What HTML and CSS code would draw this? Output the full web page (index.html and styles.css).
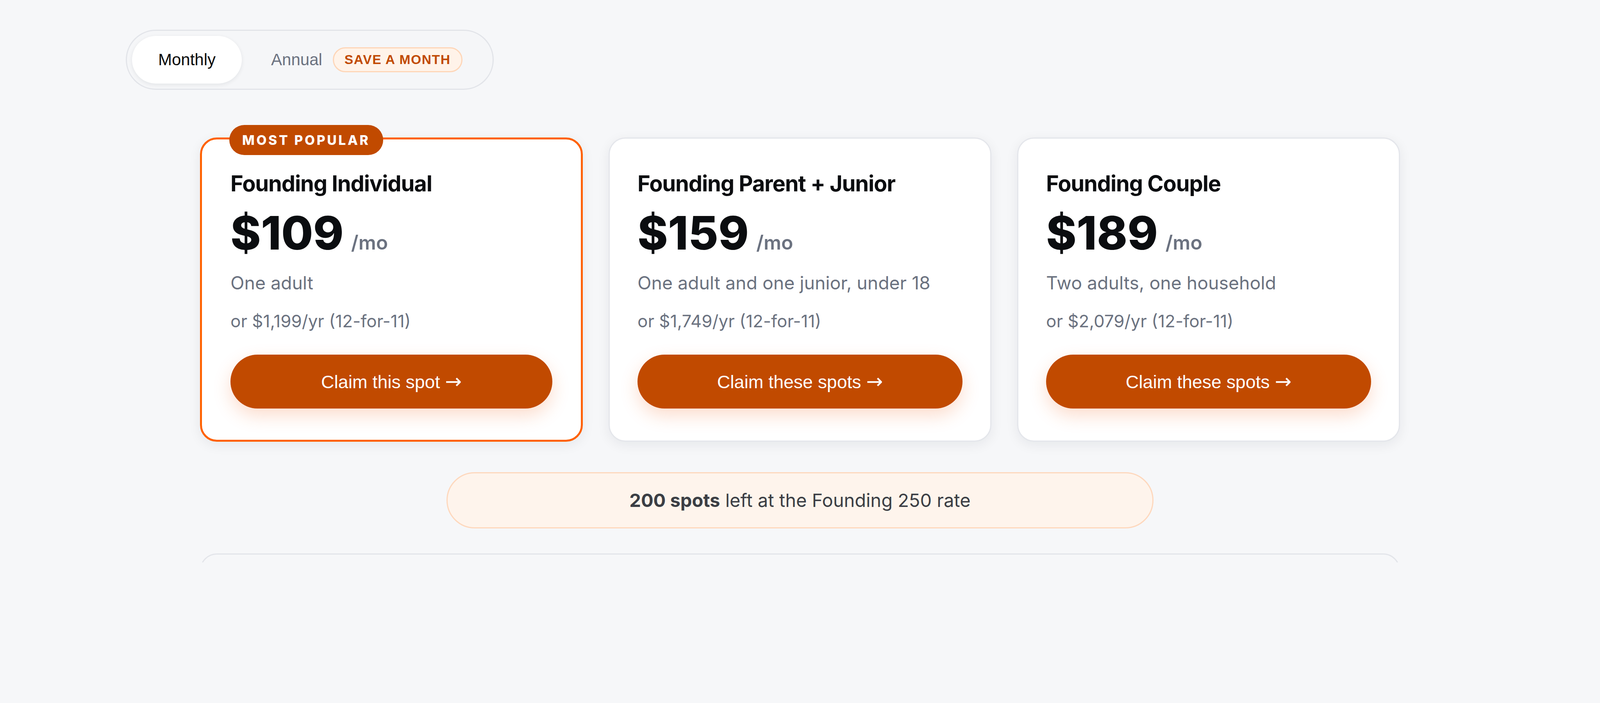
FILE: index.html
```html
<!DOCTYPE html>
<html lang="en">
<head>
  <meta charset="UTF-8">
  <meta name="viewport" content="width=device-width, initial-scale=1.0">
  <title>Founding 250 Pricing</title>
  <link rel="stylesheet" href="styles.css">
</head>
<body>
  <main class="page">
    <div class="billing-toggle">
      <button class="toggle-option active">Monthly</button>
      <button class="toggle-option">Annual <span class="save-tag">SAVE A MONTH</span></button>
    </div>

    <div class="plans">
      <div class="plan popular">
        <span class="plan-badge">MOST POPULAR</span>
        <h3 class="plan-name">Founding Individual</h3>
        <div class="plan-price"><span class="amount">$109</span><span class="period">/mo</span></div>
        <p class="plan-desc">One adult</p>
        <p class="plan-annual">or $1,199/yr (12-for-11)</p>
        <a class="plan-cta" href="#">Claim this spot <span class="arrow">→</span></a>
      </div>

      <div class="plan">
        <h3 class="plan-name">Founding Parent + Junior</h3>
        <div class="plan-price"><span class="amount">$159</span><span class="period">/mo</span></div>
        <p class="plan-desc">One adult and one junior, under 18</p>
        <p class="plan-annual">or $1,749/yr (12-for-11)</p>
        <a class="plan-cta" href="#">Claim these spots <span class="arrow">→</span></a>
      </div>

      <div class="plan">
        <h3 class="plan-name">Founding Couple</h3>
        <div class="plan-price"><span class="amount">$189</span><span class="period">/mo</span></div>
        <p class="plan-desc">Two adults, one household</p>
        <p class="plan-annual">or $2,079/yr (12-for-11)</p>
        <a class="plan-cta" href="#">Claim these spots <span class="arrow">→</span></a>
      </div>
    </div>

    <div class="spots-left"><strong>200 spots</strong> left at the Founding 250 rate</div>

    <div class="next-section"></div>
  </main>
</body>
</html>
```

FILE: styles.css
```css
* {
  margin: 0;
  padding: 0;
  box-sizing: border-box;
}

body {
  font-family: 'Inter', 'Liberation Sans', sans-serif;
  background: #f6f7f9;
  color: #0b0d10;
  overflow: hidden;
}

.page {
  width: 3456px;
  height: 1440px;
  margin: 0 auto;
  padding-top: 76px;
  overflow: hidden;
}

/* Billing toggle */
.billing-toggle {
  display: inline-flex;
  align-items: center;
  gap: 8px;
  margin-left: 2px;
  padding: 13px;
  border: 3px solid #e2e4e9;
  border-radius: 999px;
  background: #f5f6f8;
}

.toggle-option {
  display: flex;
  align-items: center;
  gap: 27px;
  height: 122px;
  padding: 0 64px 0 67px;
  border: none;
  border-radius: 999px;
  background: transparent;
  font-family: 'Liberation Sans', Arial, sans-serif;
  font-size: 42px;
  color: #6b7280;
  cursor: pointer;
}

.toggle-option.active {
  padding: 0 67px;
  background: #fff;
  color: #0a0a0a;
  box-shadow: 0 3px 11px rgba(15, 23, 42, 0.08);
}

.save-tag {
  display: inline-flex;
  align-items: center;
  height: 64px;
  padding: 0 27px;
  border: 3px solid #fed6b8;
  border-radius: 999px;
  background: #fff3e9;
  color: #c14a00;
  font-weight: 700;
  font-size: 33.6px;
  letter-spacing: 1.6px;
}

/* Plans */
.plans {
  display: grid;
  grid-template-columns: repeat(3, 1fr);
  gap: 66px;
  width: 3072px;
  margin: 122px auto 0;
}

.plan {
  position: relative;
  display: flex;
  flex-direction: column;
  padding: 78px 71px 82px;
  background: #fff;
  border: 3px solid #e4e6eb;
  border-radius: 43px;
  box-shadow: 0 8px 32px rgba(15, 23, 42, 0.07);
}

.plan.popular {
  border: 5px solid #ff6100;
  padding: 76px 73px 80px;
}

.plan-badge {
  position: absolute;
  top: -37px;
  left: 70px;
  height: 77px;
  padding: 0 33px;
  border-radius: 999px;
  background: #c14a00;
  color: #fff;
  font-size: 33.6px;
  font-weight: 800;
  line-height: 77px;
  letter-spacing: 0.14em;
}

.plan-name {
  font-size: 56px;
  font-weight: 700;
  line-height: 74px;
  letter-spacing: -0.02em;
}

.plan-price {
  display: flex;
  align-items: baseline;
  margin-top: 30px;
}

.amount {
  font-size: 118px;
  font-weight: 800;
  line-height: 118px;
}

.period {
  margin-left: 19px;
  font-size: 50px;
  font-weight: 600;
  color: #6b7280;
}

.plan-desc {
  margin-top: 37px;
  font-size: 46.4px;
  line-height: 64px;
  color: #6b7280;
}

.plan-annual {
  margin-top: 37px;
  font-size: 44px;
  line-height: 59px;
  color: #6b7280;
}

.plan-cta {
  display: block;
  margin-top: 56px;
  height: 138px;
  border-radius: 999px;
  background: #c14a00;
  color: #fff;
  font-family: 'Liberation Sans', Arial, sans-serif;
  font-size: 46.4px;
  line-height: 138px;
  text-align: center;
  text-decoration: none;
  box-shadow: 0 18px 45px rgba(240, 100, 30, 0.22);
}

.plan-cta .arrow {
  font-family: 'DejaVu Sans', sans-serif;
  font-size: 1.1em;
}

/* Spots notice */
.spots-left {
  width: 1810px;
  height: 144px;
  margin: 78px auto 0;
  border: 3px solid #fed8bd;
  border-radius: 999px;
  background: #fef4ec;
  color: #3b3e44;
  font-size: 47px;
  line-height: 138px;
  text-align: center;
}

.spots-left strong {
  font-weight: 700;
}

.next-section {
  width: 3072px;
  height: 240px;
  margin: 64px auto 0;
  border: 3px solid #e3e5ea;
  border-radius: 43px;
}
```
